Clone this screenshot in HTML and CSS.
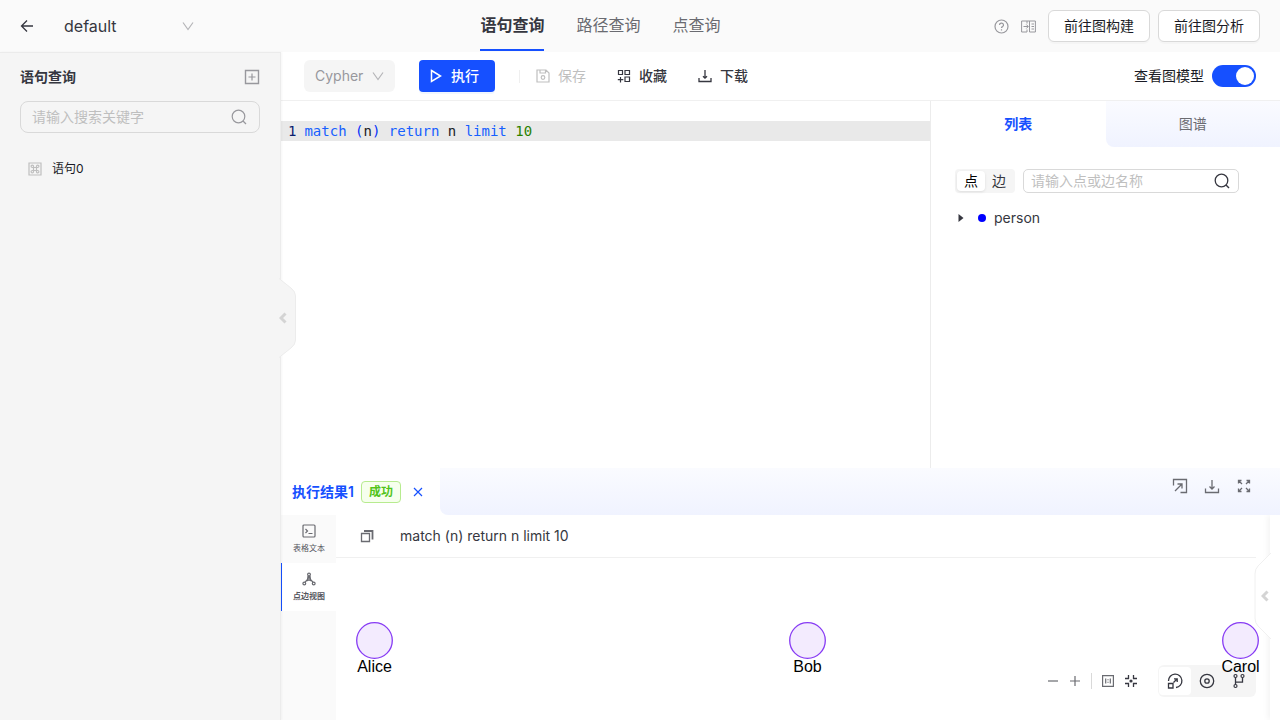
FILE: index.html
```html
<!DOCTYPE html>
<html lang="zh-CN">
<head>
    <meta charset="UTF-8">
    <meta name="viewport" content="width=device-width, initial-scale=1.0">
    <title>语句查询</title>
    <link rel="stylesheet" href="styles.css">
</head>
<body>
    <header class="header">
        <div class="headerLeft">
            <button class="iconBtn" aria-label="返回">
                <svg class="icon dark" width="14" height="14" viewBox="0 0 14 14"><path d="M13 7H1.500M7 1.500L1.500 7L7 12.500" stroke-width="1.300"/></svg>
            </button>
            <div class="selectWrap graphSelect">
                <select aria-label="图">
                    <option>default</option>
                </select>
                <svg class="icon arrow" width="12" height="12" viewBox="0 0 12 12"><path d="M1 2.500L6 9.500L11 2.500"/></svg>
            </div>
        </div>
        <nav class="nav">
            <a href="#" class="navItem active">语句查询</a>
            <a href="#" class="navItem">路径查询</a>
            <a href="#" class="navItem">点查询</a>
        </nav>
        <div class="headerRight">
            <button class="iconBtn" aria-label="帮助">
                <svg class="icon gray" width="15" height="15" viewBox="0 0 15 15"><circle cx="7.500" cy="7.500" r="6.500"/><path d="M5.500 6a2 1.900 0 1 1 3 1.600q-1 .5-1 1.500M7.500 10.300v1.100"/></svg>
            </button>
            <button class="iconBtn" aria-label="对比">
                <svg class="icon gray" width="15" height="13" viewBox="0 0 15 13"><path d="M6 3.500V1H.6v11H6V9.500M2.500 6.500H7M5.300 4.500L7.300 6.500L5.300 8.500M6 1h8.400v11H8.500V1M10.500 4h2.500M10.500 6.500h2.500M10.500 9h2.500" stroke-width="1"/></svg>
            </button>
            <div class="headerBtns">
                <button class="btn">前往图构建</button>
                <button class="btn">前往图分析</button>
            </div>
        </div>
    </header>

    <div class="layout">
        <aside class="sidebar">
            <div class="sidebarTitle">
                <h2>语句查询</h2>
                <button class="iconBtn" aria-label="新建语句">
                    <svg class="icon gray" width="16" height="16" viewBox="0 0 16 16"><path d="M1.500 1.500h13v13h-13z" stroke-width="1.400"/><path d="M8 4.500v7M4.500 8h7"/></svg>
                </button>
            </div>
            <label class="searchBox">
                <input type="text" placeholder="请输入搜索关键字" aria-label="搜索关键字">
                <svg class="icon gray" width="16" height="16" viewBox="0 0 16 16"><circle cx="7.500" cy="7.500" r="6.300"/><path d="M12 12l3 3"/></svg>
            </label>
            <a href="#" class="queryItem">
                <svg class="icon light" width="14" height="14" viewBox="0 0 14 14"><path d="M1 1h12v12H1z"/><path d="M5.500 5.500H4.300a1.200 1.200 0 1 1 1.200-1.200v5.400a1.200 1.200 0 1 1-1.200-1.200h5.400a1.200 1.200 0 1 1-1.200 1.200V4.300a1.200 1.200 0 1 1 1.200 1.200z"/></svg>
                <span>语句0</span>
            </a>
            <button class="collapse" aria-label="收起">
                <svg width="17" height="80" viewBox="0 0 17 80"><path class="handleBg" d="M0 .5L12 10Q16.500 13.500 16.500 18V62Q16.500 66.500 12 70L0 79.500"/></svg>
                <svg class="collapseArrow" width="8" height="12" viewBox="0 0 8 12"><path d="M6.500 1.500L2 6L6.500 10.500"/></svg>
            </button>
        </aside>

        <main class="main">
            <div class="toolbar">
                <div class="selectWrap langSelect">
                    <select aria-label="查询语言" disabled>
                        <option>Cypher</option>
                    </select>
                    <svg class="icon arrow" width="12" height="12" viewBox="0 0 12 12"><path d="M1 2.500L6 9.500L11 2.500"/></svg>
                </div>
                <button class="runBtn">
                    <svg class="icon" width="14" height="14" viewBox="0 0 14 14"><path d="M2.500 1.500L11.500 7L2.500 12.500z" stroke-width="1.500"/></svg>
                    执行
                </button>
                <div class="actions">
                    <button class="textBtn" disabled>
                        <svg class="icon" width="14" height="14" viewBox="0 0 14 14"><path d="M1 1h9l3 3v9H1zM4 1v3h5.500V1"/><circle cx="7" cy="8.500" r="1.800"/></svg>
                        保存
                    </button>
                    <button class="textBtn">
                        <svg class="icon" width="14" height="14" viewBox="0 0 14 14"><path d="M1.500 1.500h4v4h-4zM8 1.500h4.500v4H8zM8 8h4.500v4.500H8zM3.500 8v5.500M.8 10.700h5.500"/></svg>
                        收藏
                    </button>
                    <button class="textBtn">
                        <svg class="icon" width="14" height="14" viewBox="0 0 14 14"><path d="M1 9v3.500h12V9M7 1v8M5 7.200L7 9.200L9 7.200" stroke-width="1.300"/></svg>
                        下载
                    </button>
                </div>
                <label class="switchLabel">
                    查看图模型
                    <input type="checkbox" class="switch" checked>
                </label>
            </div>

            <div class="workspace">
                <section class="editor">
                    <div class="codeLine">
                        <span class="lineNo">1</span>
                        <code><span class="kw">match</span> <span class="paren">(</span>n<span class="paren">)</span> <span class="kw">return</span> n <span class="kw">limit</span> <span class="num">10</span></code>
                    </div>
                </section>
                <section class="model">
                    <div class="modelTabs">
                        <button class="modelTab active">列表</button>
                        <button class="modelTab">图谱</button>
                    </div>
                    <div class="modelBody">
                        <div class="modelFilter">
                            <div class="segmented">
                                <button class="active">点</button>
                                <button>边</button>
                            </div>
                            <label class="searchBox small">
                                <input type="text" placeholder="请输入点或边名称" aria-label="点或边名称">
                                <svg class="icon dark" width="16" height="16" viewBox="0 0 16 16"><circle cx="7.500" cy="7.500" r="6.300" stroke-width="1.300"/><path d="M12 12l3 3" stroke-width="1.400"/></svg>
                            </label>
                        </div>
                        <div class="treeItem">
                            <svg width="6" height="10" viewBox="0 0 6 10"><path d="M.5 1L5.500 5L.5 9z" fill="#363740"/></svg>
                            <span class="dot"></span>
                            <span>person</span>
                        </div>
                    </div>
                </section>
            </div>

            <section class="result">
                <div class="resultTabs">
                    <div class="resultTab">
                        <strong>执行结果1</strong>
                        <span class="tag">成功</span>
                        <button class="iconBtn close" aria-label="关闭">
                            <svg class="icon" width="10" height="10" viewBox="0 0 10 10"><path d="M1 1l8 8M9 1L1 9"/></svg>
                        </button>
                    </div>
                    <div class="resultTools">
                        <button class="iconBtn" aria-label="导出">
                            <svg class="icon mid" width="16" height="16" viewBox="0 0 16 16"><path d="M1.500 7.500V1.500h13v13H8.500M3 13l6.500-6.500M5.500 6h4.500v4.500" stroke-width="1.300"/></svg>
                        </button>
                        <button class="iconBtn" aria-label="下载结果">
                            <svg class="icon mid" width="16" height="16" viewBox="0 0 16 16"><path d="M1.500 10.500v4h13v-4M8 2v9M5.500 8.500L8 11l2.500-2.500" stroke-width="1.300"/></svg>
                        </button>
                        <button class="iconBtn" aria-label="全屏">
                            <svg class="icon mid" width="16" height="16" viewBox="0 0 16 16"><path d="M2.500 5.500v-3h3M2.500 2.500l3.500 3.500M10.500 2.500h3v3M13.500 2.500L10 6M2.500 10.500v3h3M2.500 13.500L6 10M13.500 10.500v3h-3M13.500 13.500L10 10" stroke-width="1.300"/></svg>
                        </button>
                    </div>
                </div>

                <div class="resultBody">
                    <div class="viewTabs">
                        <button class="viewTab">
                            <svg class="icon mid" width="14" height="14" viewBox="0 0 14 14"><rect x="1" y="1" width="12" height="12" rx="1"/><path d="M3.500 5L5.500 7L3.500 9M6.500 9.500h4"/></svg>
                            表格文本
                        </button>
                        <button class="viewTab active">
                            <svg class="icon mid" width="14" height="14" viewBox="0 0 14 14"><circle cx="7" cy="2.500" r="1.400"/><circle cx="2.300" cy="11.500" r="1.400"/><circle cx="11.700" cy="11.500" r="1.400"/><path d="M7 4v4M6 4L5.500 7.500L3 10.200M8 4l.5 3.500L11 10.200M4.500 9L7 8l2.500 1"/></svg>
                            点边视图
                        </button>
                    </div>
                    <div class="graphView">
                        <div class="statement">
                            <button class="iconBtn" aria-label="复制">
                                <svg class="icon mid" width="14" height="14" viewBox="0 0 14 14"><path d="M1.500 4.500h8v8h-8z" stroke-width="1.300"/><path d="M4 2h8.500v8.500" stroke-width="1.800"/></svg>
                            </button>
                            <span>match (n) return n limit 10</span>
                        </div>
                        <div class="canvas">
                            <div class="drawerEdge"></div>
                            <button class="drawerHandle" aria-label="展开">
                                <svg width="17" height="86" viewBox="0 0 17 86"><path class="drawerBg" d="M17 0L4 13Q1 16 1 21V65Q1 70 4 73L17 86"/></svg>
                                <svg class="collapseArrow" width="8" height="12" viewBox="0 0 8 12"><path d="M6.500 1.500L2 6L6.500 10.500"/></svg>
                            </button>
                            <div class="canvasTools">
                                <button class="iconBtn" aria-label="缩小"><svg class="icon mid" width="12" height="12" viewBox="0 0 12 12"><path d="M1 6h10"/></svg></button>
                                <button class="iconBtn" aria-label="放大"><svg class="icon mid" width="12" height="12" viewBox="0 0 12 12"><path d="M1 6h10M6 1v10"/></svg></button>
                                <span class="divider"></span>
                                <button class="iconBtn" aria-label="实际大小"><svg class="icon mid" width="12" height="12" viewBox="0 0 12 12"><path d="M.6.6h10.800v10.800H.6z"/><path d="M3.700 3.500v5M8.300 3.500v5M6 4.200v1M6 6.800v1"/></svg></button>
                                <button class="iconBtn" aria-label="居中"><svg class="icon dark" width="14" height="14" viewBox="0 0 14 14"><path d="M4.500 1v3.500H1M9.500 1v3.500H13M4.500 13V9.500H1M9.500 13V9.500H13" stroke-width="1.300"/><circle cx="7" cy="7" r="1" fill="#363740"/></svg></button>
                                <div class="layoutGroup">
                                    <button class="active" aria-label="框选"><svg class="icon dark" width="16" height="16" viewBox="0 0 16 16"><path d="M1.500 8a6.700 6.700 0 1 1 7.500 6.500M1.500 10.500h4.500v4.500H1.500zM6.500 9.500L10 6M7 5.800h3.200V9" stroke-width="1.300"/></svg></button>
                                    <button aria-label="环形布局"><svg class="icon dark" width="16" height="16" viewBox="0 0 16 16"><circle cx="8" cy="8" r="6.700" stroke-width="1.300"/><circle cx="8" cy="8" r="2.200" stroke-width="1.300"/></svg></button>
                                    <button aria-label="分支布局"><svg class="icon dark" width="16" height="16" viewBox="0 0 16 16"><circle cx="4.500" cy="3" r="1.500"/><circle cx="4.500" cy="13" r="1.500"/><circle cx="11.500" cy="3" r="1.500"/><path d="M4.500 4.500v7M11.500 4.500V9.200H4.500" stroke-width="1.300"/></svg></button>
                                </div>
                            </div>
                            <div class="node alice">
                                <svg width="37" height="37" viewBox="0 0 37 37"><circle cx="18.500" cy="18.500" r="17.800"/></svg>
                                <span>Alice</span>
                            </div>
                            <div class="node bob">
                                <svg width="37" height="37" viewBox="0 0 37 37"><circle cx="18.500" cy="18.500" r="17.800"/></svg>
                                <span>Bob</span>
                            </div>
                            <div class="node carol">
                                <svg width="37" height="37" viewBox="0 0 37 37"><circle cx="18.500" cy="18.500" r="17.800"/></svg>
                                <span>Carol</span>
                            </div>
                        </div>
                    </div>
                </div>
            </section>
        </main>
    </div>
</body>
</html>
```
FILE: styles.css
```css
* {
    box-sizing: border-box;
}
body {
    margin: 0;
    height: 100vh;
    display: flex;
    flex-direction: column;
    overflow: hidden;
    background: #fff;
    color: #363740;
    font-family: Inter, "Noto Sans CJK SC", sans-serif;
    font-size: 14px;
    line-height: 22px;
}
button, input, select {
    font: inherit;
    color: inherit;
}
button {
    cursor: pointer;
}
a {
    text-decoration: none;
    color: inherit;
}
.icon {
    flex: none;
    fill: none;
    stroke: currentColor;
    stroke-width: 1.2;
}
.dark {
    color: #363740;
}
.mid {
    color: #6a6b71;
}
.gray {
    color: #98989d;
}
.light {
    color: #bfbfbf;
}
.iconBtn {
    display: flex;
    padding: 0;
    border: 0;
    background: none;
}

/* 顶部导航 */
.header {
    height: 52px;
    flex: none;
    display: flex;
    justify-content: space-between;
    align-items: center;
    padding: 0 20px;
    background: #fafafa;
}
.headerLeft, .headerRight, .headerBtns {
    display: flex;
    align-items: center;
}
.headerLeft {
    gap: 19px;
}
.headerRight {
    gap: 12px;
}
.headerBtns {
    gap: 8px;
}
.selectWrap {
    display: grid;
    align-items: center;
}
.selectWrap select, .selectWrap .arrow {
    grid-area: 1 / 1;
}
.selectWrap select {
    width: 100%;
    height: 32px;
    padding: 0 11px;
    border: 0;
    border-radius: 6px;
    background: none;
    appearance: none;
}
.selectWrap .arrow {
    justify-self: end;
    margin-right: 11px;
    color: #b5b5b8;
    pointer-events: none;
}
.graphSelect {
    width: 154px;
    font-size: 16px;
}
.graphSelect .arrow {
    margin-right: 13px;
}
.nav {
    align-self: stretch;
    display: flex;
    gap: 32px;
    font-size: 16px;
}
.navItem {
    height: 51px;
    line-height: 51px;
    color: #6a6b71;
}
.navItem.active {
    color: #363740;
    font-weight: 700;
    border-bottom: 2px solid #1650ff;
}
.btn {
    height: 32px;
    padding: 0 15px;
    border: 1px solid #d9d9d9;
    border-radius: 6px;
    background: #fff;
    box-shadow: 0 2px 0 rgba(0, 0, 0, 0.02);
    color: #1a1b25;
}

.layout {
    flex: 1;
    min-height: 0;
    display: flex;
}

/* 左侧语句列表 */
.sidebar {
    position: relative;
    z-index: 1;
    width: 281px;
    flex: none;
    padding: 13px 20px;
    background: #f5f5f5;
    border-top: 1px solid #ebebeb;
    border-right: 1px solid #ececec;
    box-shadow: 1px 0 2px rgba(0, 0, 0, 0.04);
}
.sidebarTitle {
    display: flex;
    justify-content: space-between;
    align-items: center;
}
.sidebarTitle h2 {
    margin: 0;
    font-size: 14px;
    font-weight: 600;
}
.searchBox {
    display: flex;
    align-items: center;
    height: 32px;
    margin-top: 13px;
    padding: 0 12px 0 11px;
    border: 1px solid #d9d9d9;
    border-radius: 8px;
}
.searchBox input {
    flex: 1;
    min-width: 0;
    padding: 0;
    border: 0;
    outline: 0;
    background: none;
}
.searchBox input::placeholder {
    color: #bfbfbf;
}
.queryItem {
    display: flex;
    align-items: center;
    gap: 10px;
    margin-top: 25px;
    padding-left: 8px;
    font-size: 12px;
    color: #1a1b25;
}
.collapse {
    position: absolute;
    left: 279px;
    top: 225px;
    padding: 0;
    border: 0;
    background: none;
}
.collapse svg, .drawerHandle svg {
    display: block;
}
.handleBg {
    fill: #f5f5f5;
    stroke: #ececec;
}
.collapseArrow {
    position: absolute;
    top: 50%;
    left: 0;
    margin-top: -6px;
    fill: none;
    stroke: #d4d4d4;
    stroke-width: 3;
}

/* 工具栏 */
.main {
    flex: 1;
    min-width: 0;
    display: flex;
    flex-direction: column;
}
.toolbar {
    flex: none;
    display: flex;
    align-items: center;
    height: 49px;
    padding: 0 24px 0 23px;
    border-bottom: 1px solid #f0f0f0;
}
.langSelect {
    width: 91px;
    border-radius: 6px;
    background: #f5f5f5;
}
.langSelect select {
    color: #98989d;
    opacity: 1;
}
.runBtn {
    display: flex;
    align-items: center;
    gap: 8px;
    height: 32px;
    margin-left: 24px;
    padding: 0 16px 0 10px;
    border: 0;
    border-radius: 4px;
    background: #1650ff;
    box-shadow: 0 2px 0 rgba(5, 95, 255, 0.06);
    color: #fff;
    font-weight: 500;
}
.actions {
    display: flex;
    align-items: center;
    margin-left: 24px;
}
.actions::before {
    content: "";
    width: 1px;
    height: 13px;
    background: #efefef;
}
.textBtn {
    display: flex;
    align-items: center;
    gap: 8px;
    height: 32px;
    padding: 0 16px 0 15px;
    border: 0;
    background: none;
    color: #363740;
    font-weight: 500;
}
.textBtn:disabled {
    padding-left: 16px;
    color: #bfbfbf;
    font-weight: 400;
}
.switchLabel {
    display: flex;
    align-items: center;
    gap: 8px;
    margin-left: auto;
    color: #1a1b25;
}
.switch {
    appearance: none;
    display: flex;
    justify-content: flex-end;
    width: 44px;
    height: 22px;
    margin: 0;
    padding: 2px;
    border-radius: 11px;
    background: #1650ff;
}
.switch::before {
    content: "";
    width: 18px;
    height: 18px;
    border-radius: 50%;
    background: #fff;
}

/* 编辑器和图模型 */
.workspace {
    flex: 1;
    min-height: 0;
    display: flex;
}
.editor {
    flex: 1;
    padding-top: 20px;
}
.codeLine {
    display: flex;
    gap: 8px;
    padding-left: 7px;
    height: 20px;
    line-height: 20px;
    background: #e9e9e9;
    color: #1a1b25;
    font-family: "DejaVu Sans Mono", monospace;
}
.codeLine code {
    font: inherit;
}
.lineNo {
    color: #0b216f;
}
.kw {
    color: #1660ff;
}
.paren {
    color: #0431fa;
}
.num {
    color: #2c8200;
}
.model {
    width: 350px;
    flex: none;
    border-left: 1px solid #ececec;
}
.modelTabs {
    display: flex;
    height: 46px;
    background: #fff;
}
.modelTab {
    flex: 1;
    border: 0;
    border-radius: 0 0 0 8px;
    background: linear-gradient(#fafbff, #f0f3ff);
    color: #6a6b71;
}
.modelTab.active {
    background: #fff;
    color: #1650ff;
    font-weight: 600;
}
.modelBody {
    padding: 22px 24px;
}
.modelFilter {
    display: flex;
    gap: 8px;
}
.segmented {
    display: flex;
    height: 24px;
    padding: 2px;
    border-radius: 4px;
    background: #f5f5f5;
}
.segmented button {
    width: 28px;
    padding: 0;
    border: 0;
    border-radius: 4px;
    background: none;
    line-height: 20px;
}
.segmented .active {
    background: #fff;
    box-shadow: 0 1px 3px rgba(0, 0, 0, 0.1);
    color: #000;
}
.searchBox.small {
    width: 216px;
    height: 24px;
    margin: 0;
    padding: 0 8px 0 7px;
    border-radius: 5px;
}
.treeItem {
    display: flex;
    align-items: center;
    margin-top: 14px;
    padding-left: 3px;
}
.dot {
    width: 8px;
    height: 8px;
    margin: 0 8px 0 14px;
    border-radius: 50%;
    background: #00f;
}

/* 执行结果 */
.result {
    flex: none;
    height: 252px;
    display: flex;
    flex-direction: column;
}
.resultTabs {
    flex: none;
    display: flex;
    height: 47px;
    background: #fff;
}
.resultTab {
    width: 159px;
    display: flex;
    align-items: center;
    padding-left: 11px;
    color: #1650ff;
}
.resultTab strong {
    font-weight: 600;
}
.tag {
    margin-left: 7px;
    padding: 0 7px;
    border: 1px solid #b7eb8f;
    border-radius: 4px;
    background: #f6ffed;
    color: #52c41a;
    font-size: 12px;
    font-weight: 600;
    line-height: 20px;
}
.close {
    margin-left: 12px;
}
.resultTools {
    flex: 1;
    display: flex;
    justify-content: flex-end;
    gap: 16px;
    padding: 10px 28px;
    border-radius: 0 0 0 8px;
    background: linear-gradient(#fafbff, #f0f3ff);
}
.resultBody {
    flex: 1;
    display: flex;
}
.viewTabs {
    width: 55px;
    flex: none;
    background: #fafafa;
}
.viewTab {
    display: flex;
    flex-direction: column;
    align-items: center;
    justify-content: center;
    gap: 4px;
    width: 100%;
    height: 48px;
    padding: 0;
    border: 0;
    border-left: 1px solid transparent;
    background: none;
    color: #55565d;
    font-size: 8px;
    line-height: 12px;
}
.viewTab.active {
    border-left-color: #1650ff;
    background: #fff;
    font-weight: 700;
}
.graphView {
    flex: 1;
    min-width: 0;
    display: flex;
    flex-direction: column;
}
.statement {
    flex: none;
    display: flex;
    align-items: center;
    gap: 26px;
    height: 43px;
    margin-right: 24px;
    padding-left: 24px;
    border-bottom: 1px solid #f0f0f0;
}
.canvas {
    position: relative;
    flex: 1;
}
.drawerEdge {
    position: absolute;
    top: -43px;
    right: 0;
    bottom: 0;
    width: 10px;
    background: #fff;
    box-shadow: -2px 0 6px rgba(0, 0, 0, 0.05);
    clip-path: inset(0 0 0 -12px);
}
.drawerHandle {
    position: absolute;
    top: -5px;
    right: 9px;
    padding: 0;
    border: 0;
    background: none;
}
.drawerHandle .collapseArrow {
    left: 7px;
}
.drawerBg {
    fill: #fff;
    stroke: #f0f0f0;
}
.canvasTools {
    position: absolute;
    right: 24px;
    bottom: 23px;
    display: flex;
    align-items: center;
    gap: 10px;
}
.divider {
    width: 1px;
    height: 16px;
    background: #d9d9d9;
}
.layoutGroup {
    display: flex;
    height: 32px;
    margin-left: 10px;
    padding: 2px 1px;
    border-radius: 6px;
    background: #f5f5f5;
}
.layoutGroup button {
    display: flex;
    align-items: center;
    justify-content: center;
    width: 32px;
    padding: 0;
    border: 0;
    border-radius: 4px;
    background: none;
}
.layoutGroup .active {
    background: #fff;
}
.node {
    position: absolute;
    top: 64px;
    width: 61px;
    display: flex;
    flex-direction: column;
    align-items: center;
    color: #000;
    font-family: "Liberation Sans", sans-serif;
    font-size: 16px;
    line-height: 16px;
}
.node circle {
    fill: #f3ebfe;
    stroke: #873bf4;
    stroke-width: 1.3;
}
.alice {
    left: 8px;
}
.bob {
    left: 441px;
}
.carol {
    left: 874px;
}
```
